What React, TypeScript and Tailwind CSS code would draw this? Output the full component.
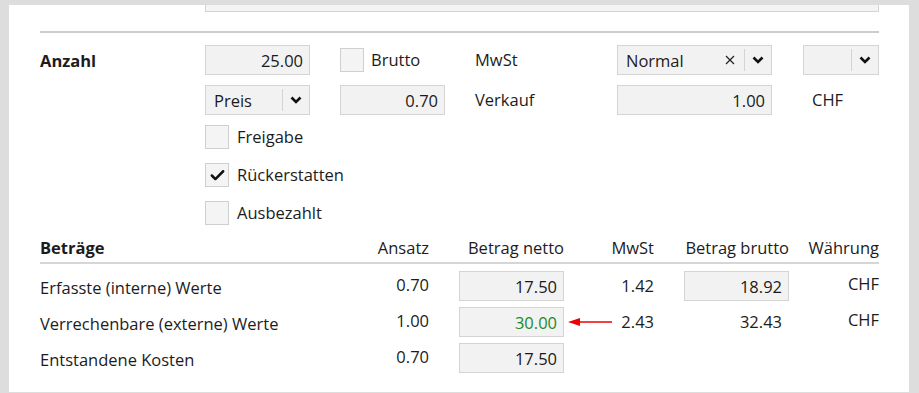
import { Check } from "lucide-react";

const font = { fontFamily: "'Open Sans', 'Noto Sans', sans-serif" };

const Chevron = () => (
  <svg width="12" height="8" viewBox="0 0 12 8" className="block">
    <polyline points="1.5,1.5 6,6 10.5,1.5" fill="none" stroke="#111" strokeWidth="2.6" />
  </svg>
);

const Field = ({ value, w, green }: { value: string; w: string; green?: boolean }) => (
  <div
    className={`${w} h-[30px] bg-[#f2f2f2] border border-[#d4d4d4] flex items-center justify-end pr-[6px] pt-[1px] ${
      green ? "text-[#1f8a1f]" : "text-[#1a1a1a]"
    }`}
  >
    {value}
  </div>
);

const Select = ({ value, w, clear }: { value: string; w: string; clear?: boolean }) => (
  <div className={`${w} h-[30px] bg-[#f2f2f2] border border-[#d4d4d4] flex items-center`}>
    <span className="flex-1 pl-[8px] pt-[1px]">{value}</span>
    {clear && (
      <svg width="10" height="10" viewBox="0 0 10 10" className="mr-[9px]">
        <path d="M1 1 L9 9 M9 1 L1 9" stroke="#222" strokeWidth="1.2" />
      </svg>
    )}
    <div className="w-[27px] h-[22px] border-l border-[#d4d4d4] flex items-center justify-center">
      <Chevron />
    </div>
  </div>
);

const Box = ({ checked }: { checked?: boolean }) => (
  <div className="w-[24px] h-[24px] bg-[#f4f4f4] border border-[#cfcfcf] flex items-center justify-center">
    {checked && <Check size={17} strokeWidth={3.5} color="#111" />}
  </div>
);

const rows = [
  { label: "Erfasste (interne) Werte", ansatz: "0.70", netto: "17.50", mwst: "1.42", brutto: "18.92", bruttoBox: true, cur: "CHF" },
  { label: "Verrechenbare (externe) Werte", ansatz: "1.00", netto: "30.00", green: true, arrow: true, mwst: "2.43", brutto: "32.43", cur: "CHF" },
  { label: "Entstandene Kosten", ansatz: "0.70", netto: "17.50" },
];

export default function App() {
  return (
    <div
      className="w-[919px] h-[393px] overflow-hidden bg-[#dddddd] pt-[6px] pl-[9px] pr-[10px] text-[16.5px] leading-[24px] text-[#1c1c1c]"
      style={font}
    >
      <div className="bg-white h-full pl-[31px] pr-[30px]">
        {/* scrolled-off field above */}
        <div className="ml-[165px] h-[7px] -mt-[1px] bg-[#f4f4f4] border border-t-0 border-[#d4d4d4]" />

        <div className="mt-[19px] h-[2px] bg-[#cccccc]" />

        {/* form */}
        <div className="mt-[12px] grid grid-cols-[165px_135px_135px_142px_186px_75px] gap-y-[10px] items-center">
          <div className="font-bold pt-[1px]">Anzahl</div>
          <Field value="25.00" w="w-[105px]" />
          <div className="flex items-center gap-[7px]">
            <Box />
            <span>Brutto</span>
          </div>
          <div>MwSt</div>
          <Select value="Normal" w="w-[155px]" clear />
          <Select value="" w="w-[76px]" />

          <div />
          <Select value="Preis" w="w-[105px]" />
          <Field value="0.70" w="w-[105px]" />
          <div>Verkauf</div>
          <Field value="1.00" w="w-[155px]" />
          <div className="pl-[9px]">CHF</div>
        </div>

        <div className="ml-[165px] mt-[10px] flex flex-col gap-[14px]">
          {[
            { t: "Freigabe" },
            { t: "Rückerstatten", c: true },
            { t: "Ausbezahlt" },
          ].map((r) => (
            <div key={r.t} className="flex items-center gap-[8px]">
              <Box checked={r.c} />
              <span>{r.t}</span>
            </div>
          ))}
        </div>

        {/* amounts table */}
        <div className="mt-[11px] grid grid-cols-[309px_80px_135px_90px_135px_90px]">
          <div className="font-bold pb-[2px]">Beträge</div>
          <div className="text-right pb-[2px]">Ansatz</div>
          <div className="text-right pb-[2px]">Betrag netto</div>
          <div className="text-right pb-[2px]">MwSt</div>
          <div className="text-right pb-[2px]">Betrag brutto</div>
          <div className="text-right pb-[2px]">Währung</div>
          <div className="col-span-6 h-[2px] bg-[#d6d6d6] mb-[7px]" />

          {rows.map((r) => (
            <div key={r.label} className="contents">
              <div className="h-[36px] flex items-center pb-[2px]">{r.label}</div>
              <div className="h-[36px] flex items-center justify-end pb-[8px]">{r.ansatz}</div>
              <div className="h-[36px] flex items-start justify-end">
                <Field value={r.netto} w="w-[105px]" green={r.green} />
              </div>
              <div className="h-[36px] flex items-center pb-[6px]">
                {r.arrow && (
                  <svg width="46" height="10" viewBox="0 0 46 10" className="ml-[4px]">
                    <line x1="10" y1="5" x2="44" y2="5" stroke="#e00" strokeWidth="1.3" />
                    <polygon points="0,5 12,1 12,9" fill="#e00" />
                  </svg>
                )}
                <span className="ml-auto">{r.mwst}</span>
              </div>
              <div className="h-[36px] flex items-start justify-end">
                {r.bruttoBox ? (
                  <Field value={r.brutto!} w="w-[105px]" />
                ) : (
                  <span className="h-[30px] flex items-center pr-[7px]">{r.brutto}</span>
                )}
              </div>
              <div className="h-[36px] flex items-center justify-end pb-[10px]">{r.cur}</div>
            </div>
          ))}
        </div>
      </div>
    </div>
  );
}
